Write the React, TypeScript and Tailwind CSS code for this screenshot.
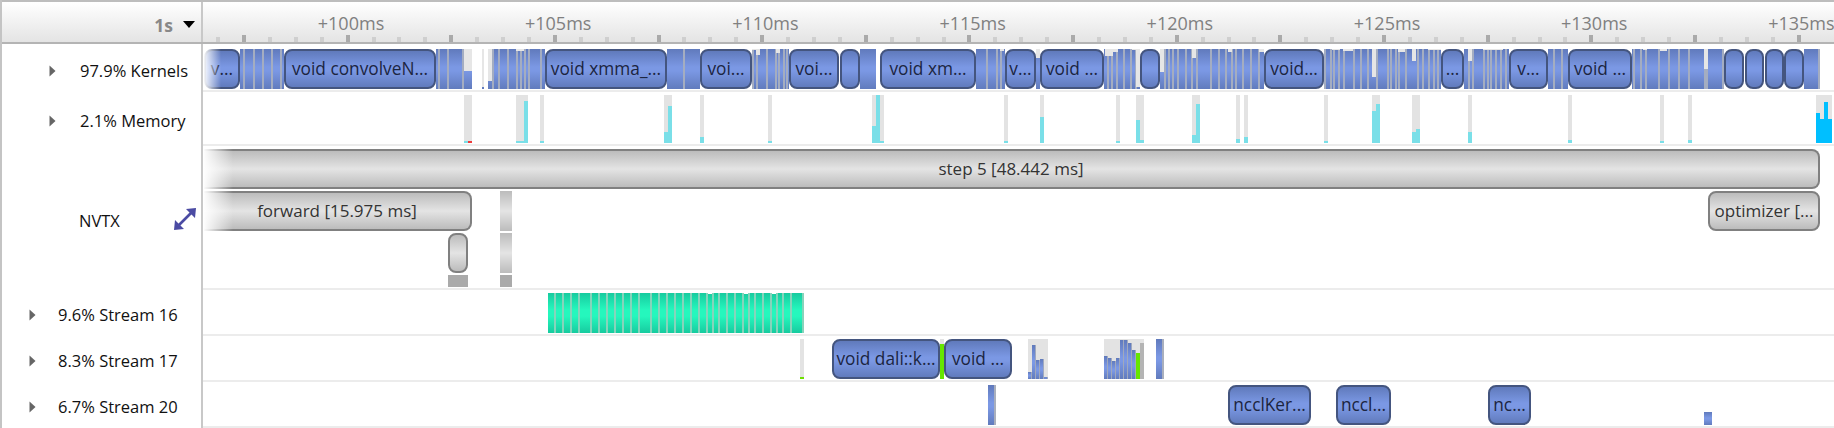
import React from 'react';

// every x below is a page x in the timeline, the tracks start at TRACK_X
const TRACK_X = 203;

const BLUE = 'bg-[linear-gradient(to_bottom,#607abc,#7b98e4_45%,#7b98e4_55%,#617bbd)]';
const GREY = 'bg-[linear-gradient(to_bottom,#bcbcbc,#e4e4e4_50%,#bcbcbc)]';
const GREEN = 'bg-[linear-gradient(to_bottom,#17cb9f,#25f7bd_42%,#25f7bd_58%,#17cb9f)]';

type Run = { from: number; to: number; seps?: number[]; notches?: [number, number, number][] };
type Pill = { from: number; to: number; label?: string };
type Fill = [number, number, number, string?];

const kernelPills: Pill[] = [
  { from: 204, to: 240, label: 'v...' },
  { from: 284, to: 436, label: 'void convolveN...' },
  { from: 545, to: 667, label: 'void xmma_...' },
  { from: 700, to: 752, label: 'voi...' },
  { from: 789, to: 839, label: 'voi...' },
  { from: 840, to: 860 },
  { from: 880, to: 976, label: 'void xm...' },
  { from: 1005, to: 1036, label: 'v...' },
  { from: 1040, to: 1104, label: 'void ...' },
  { from: 1140, to: 1160 },
  { from: 1264, to: 1324, label: 'void...' },
  { from: 1441, to: 1464, label: '...' },
  { from: 1509, to: 1548, label: 'v...' },
  { from: 1568, to: 1632, label: 'void ...' },
  { from: 1724, to: 1744 },
  { from: 1745, to: 1764 },
  { from: 1765, to: 1784 },
  { from: 1784, to: 1804 },
];

const kernelRuns: Run[] = [
  { from: 240, to: 284, seps: [243, 253, 262, 271, 280] },
  { from: 436, to: 472, seps: [438, 447, 462], notches: [[464, 8, 71]] },
  { from: 482, to: 484, notches: [[482, 2, 87]] },
  { from: 488, to: 545, seps: [492, 498, 507, 516, 520, 524, 528, 540], notches: [[488, 4, 81], [516, 8, 51]] },
  { from: 667, to: 700, seps: [683] },
  { from: 752, to: 789, seps: [752, 756, 766, 775, 778, 783, 786], notches: [[752, 4, 50], [756, 4, 55], [776, 4, 53]] },
  { from: 860, to: 876 },
  { from: 976, to: 1005, seps: [986, 996, 1000], notches: [[1000, 4, 51]] },
  { from: 1036, to: 1040, notches: [[1036, 4, 58]] },
  { from: 1104, to: 1140, seps: [1107, 1111, 1116, 1123, 1130, 1135], notches: [[1105, 8, 56], [1113, 5, 52], [1132, 4, 50], [1136, 4, 87]] },
  {
    from: 1160, to: 1264,
    seps: [1164, 1168, 1172, 1177, 1185, 1191, 1196, 1210, 1218, 1225, 1231, 1235, 1242, 1250, 1258],
    notches: [[1160, 4, 72], [1192, 4, 58], [1228, 4, 52], [1259, 5, 52]],
  },
  {
    from: 1324, to: 1441,
    seps: [1324, 1330, 1333, 1338, 1343, 1353, 1360, 1367, 1376, 1387, 1390, 1395, 1398, 1405, 1417, 1422, 1428, 1433, 1437],
    notches: [[1332, 8, 50], [1343, 10, 51], [1357, 10, 49], [1372, 4, 77], [1387, 10, 49], [1398, 7, 52], [1412, 4, 61], [1428, 13, 50]],
  },
  {
    from: 1464, to: 1509,
    seps: [1468, 1472, 1483, 1487, 1490, 1495, 1500, 1505],
    notches: [[1468, 4, 61], [1483, 20, 50]],
  },
  { from: 1548, to: 1568, seps: [1553, 1561] },
  {
    from: 1632, to: 1724,
    seps: [1633, 1640, 1645, 1658, 1668, 1678, 1688, 1704, 1706, 1722],
    notches: [[1643, 4, 50], [1660, 7, 51], [1704, 4, 69]],
  },
  { from: 1804, to: 1820, seps: [1818] },
];

const CYAN = '#7adfe8';
const memoryCols: [number, number][] = [
  [464, 8], [516, 12], [540, 4], [664, 8], [700, 4], [768, 4], [872, 12], [1004, 4], [1040, 4], [1116, 4], [1136, 8],
  [1192, 8], [1236, 4], [1244, 4], [1324, 4], [1372, 8], [1412, 8], [1468, 4], [1568, 4], [1660, 4], [1688, 4], [1816, 16],
];
const memoryFills: Fill[] = [
  [464, 4, 141], [468, 4, 141, '#ef3b3b'], [516, 8, 141], [524, 4, 101], [540, 4, 141],
  [664, 4, 132], [668, 4, 106], [700, 4, 137], [768, 4, 141], [872, 4, 126], [876, 4, 95], [880, 4, 141],
  [1004, 4, 141], [1040, 4, 117], [1116, 4, 141], [1136, 4, 120], [1140, 4, 140], [1192, 4, 135], [1196, 4, 104],
  [1236, 4, 139], [1244, 4, 137], [1324, 4, 141], [1372, 4, 111], [1376, 4, 104], [1412, 4, 132], [1416, 4, 129],
  [1468, 4, 132], [1568, 4, 140], [1660, 4, 141], [1688, 4, 140],
  [1816, 4, 113, '#00bfff'], [1820, 4, 119, '#00bfff'], [1824, 4, 102, '#00bfff'], [1828, 4, 119, '#00bfff'],
];

const greenSeps = [
  9, 17, 25, 33, 45, 53, 61, 69, 77, 85, 93, 105, 113, 121, 129, 137, 145, 153, 161, 167, 173, 181, 189, 197, 203, 209,
  217, 225, 231, 237, 245, 257,
];

const histogramA: Fill[] = [[1028, 4, 372], [1032, 4, 345], [1036, 4, 360], [1040, 4, 359], [1044, 4, 377]];
const histogramB: Fill[] = [
  [1104, 4, 356], [1108, 4, 358], [1112, 4, 361], [1116, 4, 358], [1120, 4, 340], [1124, 4, 340],
  [1128, 4, 343], [1132, 4, 350],
];

const ticks = Array.from({ length: 62 }, (_, i) => i - 1);
const labels = [100, 105, 110, 115, 120, 125, 130, 135];

const Box = ({ x, w, y, h, className, color }: { x: number; w: number; y: number; h: number; className?: string; color?: string }) => (
  <div
    className={`absolute ${className ?? ''}`}
    style={{ left: x - TRACK_X, width: w, top: y, height: h, backgroundColor: color }}
  />
);

const KernelPill = ({ from, to, label, top, height = 40 }: Pill & { top: number; height?: number }) => (
  <div
    className={`absolute flex items-center justify-center overflow-hidden rounded-[8px] border-2 border-[#44557f] text-[17.3px] whitespace-nowrap text-[#1c2540] ${BLUE}`}
    style={{ left: from - TRACK_X, width: to - from, top, height }}
  >
    {label}
  </div>
);

const Fade = ({ y, h, w }: { y: number; h: number; w: number }) => (
  <div
    className="absolute left-0 bg-[linear-gradient(to_right,#ffffff,rgba(255,255,255,0))]"
    style={{ top: y, height: h, width: w }}
  />
);

const Caret = () => (
  <svg width="7" height="12" viewBox="0 0 7 12" className="shrink-0">
    <path d="M0.5 0.5 L6.5 6 L0.5 11.5 Z" fill="#666666" />
  </svg>
);

const Label = ({ className, text }: { className: string; text: string }) => (
  <div className={`flex w-[201px] shrink-0 items-center border-r-2 border-[#c8c8c8] text-[16.5px] text-[#111111] ${className}`}>
    <Caret />
    <span className="whitespace-nowrap">{text}</span>
  </div>
);

// bar of a small histogram: 3px of blue and a pale line on its right
const HistogramBars = ({ bars }: { bars: Fill[] }) => (
  <>
    {bars.map(([x, w, top]) => (
      <React.Fragment key={x}>
        <Box x={x} w={w - 1} y={top - 336} h={379 - top} className={BLUE} />
        <Box x={x + w - 1} w={1} y={top - 336} h={379 - top} color="#a0a9be" />
      </React.Fragment>
    ))}
  </>
);

export default function App() {
  return (
    <div className="h-[428px] w-[1834px] overflow-hidden border-l-2 border-[#c4c4c4] bg-white font-['Open_Sans','Liberation_Sans',sans-serif]">
      {/* Time ruler */}
      <div className="flex h-[44px] border-t-2 border-b-2 border-t-[#bdbdbd] border-b-[#b4b4b4] bg-[linear-gradient(to_bottom,#ffffff,#e4e4e4)]">
        <div className="flex w-[201px] shrink-0 items-center justify-end gap-[10px] border-r-2 border-[#c8c8c8] pt-[7px] pr-[6px]">
          <span className="text-[17.5px] font-bold text-[#888888]">1s</span>
          <svg width="12" height="7" viewBox="0 0 12 7" className="mb-[3px]">
            <path d="M0 0 H12 L6 7 Z" fill="#000000" />
          </svg>
        </div>
        <div className="relative flex-1">
          {labels.map((ms, i) => (
            <span
              key={ms}
              className="absolute top-[10px] w-[90px] text-center text-[18px] leading-[22px] whitespace-nowrap text-[#808080]"
              style={{ left: 351 + i * 207.2 - 45 - TRACK_X }}
            >
              +{ms}ms
            </span>
          ))}
          {ticks.map((i) => {
            const major = i % 4 === 0;
            return (
              <div
                key={i}
                className={major ? 'absolute bottom-0 h-[7px] w-[4px] bg-[#aaaaaa]' : 'absolute bottom-0 h-[5px] w-[4px] bg-[#cfcfcf]'}
                style={{ left: Math.round(242 + i * 25.91) - TRACK_X }}
              />
            );
          })}
        </div>
      </div>

      {/* Kernels */}
      <div className="flex h-[48px]">
        <Label className="gap-[24px] pt-[6px] pl-[47px]" text="97.9% Kernels" />
        <div className="relative flex-1 border-b-2 border-[#ececec]">
          {kernelRuns.map((run) => (
            <React.Fragment key={run.from}>
              <Box x={run.from} w={run.to - run.from} y={5} h={40} className={BLUE} />
              {run.seps?.map((s) => <Box key={s} x={s} w={2} y={5} h={40} color="#a4adc1" />)}
              {run.notches?.map(([x, w, top]) => <Box key={x} x={x} w={w} y={5} h={top - 49} color="#e6e6e6" />)}
            </React.Fragment>
          ))}
          {kernelPills.map((p) => <KernelPill key={p.from} {...p} top={5} />)}
          <Fade y={5} h={40} w={18} />
        </div>
      </div>

      {/* Memory */}
      <div className="flex h-[54px]">
        <Label className="gap-[24px] pt-[4px] pl-[47px]" text="2.1% Memory" />
        <div className="relative flex-1 border-b-2 border-[#ececec]">
          {memoryCols.map(([x, w]) => <Box key={x} x={x} w={w} y={3} h={48} color="#e3e3e3" />)}
          {memoryFills.map(([x, w, top, color]) => (
            <Box key={x} x={x} w={w} y={top - 92} h={143 - top} color={color ?? CYAN} />
          ))}
        </div>
      </div>

      {/* NVTX */}
      <div className="flex h-[144px]">
        <div className="relative flex w-[201px] shrink-0 items-center border-r-2 border-[#c8c8c8] pt-[6px] pl-[77px] text-[16.5px] text-[#111111]">
          <span>NVTX</span>
          <svg width="24" height="24" viewBox="0 0 24 24" className="absolute top-[61px] left-[171px]">
            <path d="M6 18 L18 6" stroke="#4b4ba3" strokeWidth="2.6" />
            <path d="M23 1 L22 11 L13 2 Z M1 23 L2 13 L11 22 Z" fill="#4b4ba3" />
          </svg>
        </div>
        <div className="relative flex-1 border-b-2 border-[#ececec] text-[17px] text-[#333333]">
          <div
            className={`absolute top-[3px] left-[1px] flex h-[40px] w-[1616px] items-center justify-center rounded-r-[8px] border-y-2 border-r-2 border-[#808080] ${GREY}`}
          >
            step 5 [48.442 ms]
          </div>
          <div
            className={`absolute top-[45px] left-[1px] flex h-[40px] w-[268px] items-center justify-center rounded-r-[8px] border-y-2 border-r-2 border-[#808080] ${GREY}`}
          >
            forward [15.975 ms]
          </div>
          <Fade y={3} h={40} w={30} />
          <Fade y={45} h={40} w={30} />
          <div className={`absolute top-[87px] left-[245px] h-[40px] w-[20px] rounded-[8px] border-2 border-[#808080] ${GREY}`} />
          <Box x={448} w={20} y={129} h={12} color="#aaaaaa" />
          <Box x={500} w={12} y={45} h={40} className={GREY} />
          <Box x={500} w={12} y={87} h={40} className={GREY} />
          <Box x={500} w={12} y={129} h={12} color="#aaaaaa" />
          <div
            className={`absolute top-[45px] left-[1505px] flex h-[40px] w-[112px] items-center justify-center rounded-[8px] border-2 border-[#808080] whitespace-nowrap ${GREY}`}
          >
            optimizer [...
          </div>
        </div>
      </div>

      {/* Stream 16 */}
      <div className="flex h-[46px]">
        <Label className="gap-[22px] pt-[4px] pl-[27px]" text="9.6% Stream 16" />
        <div className="relative flex-1 border-b-2 border-[#ececec]">
          <Box x={548} w={256} y={3} h={40} className={GREEN} />
          {greenSeps.map((s) => <Box key={s} x={545 + s} w={2} y={3} h={40} color="#86d4bb" />)}
          <Box x={708} w={4} y={3} h={1} color="#ffffff" />
          <Box x={744} w={4} y={3} h={1} color="#ffffff" />
          <Box x={772} w={4} y={3} h={1} color="#ffffff" />
        </div>
      </div>

      {/* Stream 17 */}
      <div className="flex h-[46px]">
        <Label className="gap-[22px] pt-[4px] pl-[27px]" text="8.3% Stream 17" />
        <div className="relative flex-1 border-b-2 border-[#ececec]">
          <Box x={800} w={4} y={3} h={40} color="#e3e3e3" />
          <Box x={800} w={4} y={41} h={2} color="#6ee000" />
          <KernelPill from={832} to={940} label="void dali::k..." top={3} />
          <Box x={940} w={4} y={3} h={40} color="#e3e3e3" />
          <Box x={940} w={4} y={8} h={35} color="#66e600" />
          <KernelPill from={944} to={1012} label="void ..." top={3} />
          <Box x={1028} w={20} y={3} h={40} color="#e3e3e3" />
          <HistogramBars bars={histogramA} />
          <Box x={1104} w={40} y={3} h={40} color="#e3e3e3" />
          <HistogramBars bars={histogramB} />
          <Box x={1136} w={4} y={17} h={26} color="#66e600" />
          <Box x={1140} w={4} y={7} h={36} color="#b4b4b4" />
          <Box x={1156} w={6} y={3} h={40} className={BLUE} />
          <Box x={1162} w={2} y={3} h={40} color="#a9afbd" />
        </div>
      </div>

      {/* Stream 20 */}
      <div className="flex h-[46px]">
        <Label className="gap-[22px] pt-[4px] pl-[27px]" text="6.7% Stream 20" />
        <div className="relative flex-1 border-b-2 border-[#ececec]">
          <Box x={988} w={6} y={3} h={40} className={BLUE} />
          <Box x={994} w={2} y={3} h={40} color="#a9afbd" />
          <KernelPill from={1228} to={1311} label="ncclKer..." top={3} />
          <KernelPill from={1336} to={1391} label="nccl..." top={3} />
          <KernelPill from={1488} to={1531} label="nc..." top={3} />
          <Box x={1704} w={8} y={30} h={13} className={BLUE} />
        </div>
      </div>
    </div>
  );
}
